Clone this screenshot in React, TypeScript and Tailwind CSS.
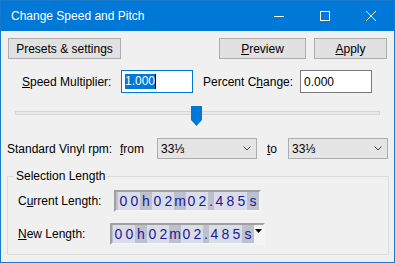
import React from "react"

type Cell = { t: string; digit?: boolean; w?: string }

const timeCells: Cell[] = [
  { t: "0", digit: true },
  { t: "0", digit: true },
  { t: "h", w: "w-[12px]" },
  { t: "0", digit: true },
  { t: "2", digit: true },
  { t: "m", w: "w-[12px]" },
  { t: "0", digit: true },
  { t: "2", digit: true },
  { t: ".", w: "w-[6px]" },
  { t: "4", digit: true },
  { t: "8", digit: true },
  { t: "5", digit: true },
  { t: "s", w: "w-[12px]" },
]

const TimeCtrl = ({ dropdown }: { dropdown?: boolean }) => (
  <div
    className={`flex h-[22px] border-2 border-t-[#a0a0a0] border-l-[#a0a0a0] border-b-[#f4f4f4] border-r-[#f4f4f4] bg-[#bcc0cf] ${
      dropdown ? "w-[155px] pl-[1px]" : "w-[147px] pl-[2px]"
    }`}
  >
    {timeCells.map((c, i) => (
      <div
        key={i}
        className={`h-full flex items-center justify-center text-[14px] leading-none text-[#1a1a96] ${
          c.digit ? "w-[11px] bg-[#dadde8]" : c.w
        }`}
      >
        {c.t}
      </div>
    ))}
    {dropdown && (
      <div className="w-[9px] h-full bg-[#f4f4f4] flex justify-center pt-[4px]">
        <svg width="7" height="4" viewBox="0 0 7 4">
          <path d="M0 0 H7 L3.5 4 Z" fill="#000" />
        </svg>
      </div>
    )}
  </div>
)

const Combo = ({ value }: { value: string }) => (
  <div className="w-[100px] h-[21px] bg-[#e5e5e5] border border-[#adadad] flex items-center justify-between pl-[3px] pr-[5px]">
    <span>{value}</span>
    <svg width="8" height="5" viewBox="0 0 8 5">
      <path d="M0.5 0.5 L4 4 L7.5 0.5" fill="none" stroke="#404040" strokeWidth="1" />
    </svg>
  </div>
)

const Button = ({ className, children }: { className: string; children: React.ReactNode }) => (
  <button className={`h-[21px] bg-[#e1e1e1] border border-[#adadad] text-black flex items-center justify-center ${className}`}>
    {children}
  </button>
)

const App: React.FC = () => {
  return (
    <div className="w-[395px] h-[263px] bg-[#f0f0f0] border border-[#1979ca] font-['Liberation_Sans',Arial,sans-serif] text-[12px] text-black overflow-hidden">
      <div className="h-[30px] bg-[#0078d7] flex items-center text-white">
        <span className="ml-[10px] text-[12px]">Change Speed and Pitch</span>
        <div className="ml-auto flex items-center h-full">
          <div className="w-[46px] h-full flex items-center justify-center">
            <svg width="10" height="10" viewBox="0 0 10 10">
              <path d="M0 5.5 H10" stroke="#fff" strokeWidth="1" />
            </svg>
          </div>
          <div className="w-[46px] h-full flex items-center justify-center">
            <svg width="10" height="10" viewBox="0 0 10 10">
              <rect x="0.5" y="0.5" width="9" height="9" fill="none" stroke="#fff" strokeWidth="1" />
            </svg>
          </div>
          <div className="w-[46px] h-full flex items-center justify-center">
            <svg width="10" height="10" viewBox="0 0 10 10">
              <path d="M0 0 L10 10 M10 0 L0 10" stroke="#fff" strokeWidth="1" />
            </svg>
          </div>
        </div>
      </div>

      <div className="flex mt-[7px] pl-[7px] pr-[7px]">
        <Button className="w-[113px]">Presets &amp; settings</Button>
        <Button className="w-[87px] ml-auto">
          <span className="underline">P</span>review
        </Button>
        <Button className="w-[73px] ml-[8px]">
          <span className="underline">A</span>pply
        </Button>
      </div>

      <div className="flex items-center mt-[11px] pl-[21px]">
        <span className="w-[99px]">
          <span className="underline">S</span>peed Multiplier:
        </span>
        <div className="w-[72px] h-[23px] bg-white border border-[#0078d7] flex items-center pl-[3px]">
          <span className="bg-[#0078d7] text-white leading-[15px]">1.000</span>
          <span className="w-[1px] h-[15px] bg-black" />
        </div>
        <span className="w-[97px] ml-[10px]">
          Percent C<span className="underline">h</span>ange:
        </span>
        <div className="w-[72px] h-[23px] bg-white border border-[#7a7a7a] flex items-center pl-[3px]">
          0.000
        </div>
      </div>

      <div className="relative h-[20px] mt-[13px] mx-[14px]">
        <div className="absolute left-0 right-0 top-[5px] h-[4px] bg-[#e7eaea] border border-[#d6d6d6]" />
        <svg className="absolute left-[176px] top-0" width="11" height="20" viewBox="0 0 11 20">
          <path d="M0 0 H11 V14 L5.5 20 L0 14 Z" fill="#0078d7" />
        </svg>
      </div>

      <div className="flex items-center mt-[12px] pl-[6px]">
        <span className="w-[113px]">Standard Vinyl rpm:</span>
        <span className="w-[37px]">
          <span className="underline">f</span>rom
        </span>
        <Combo value="33⅓" />
        <span className="ml-[10px] w-[21px]">
          <span className="underline">t</span>o
        </span>
        <Combo value="33⅓" />
      </div>

      <fieldset className="mt-[10px] ml-[6px] w-[382px] border border-[#dcdcdc] pb-[9px]">
        <legend className="ml-[6px] px-[2px] leading-[14px]">Selection Length</legend>
        <div className="flex items-center mt-[7px] pl-[10px]">
          <span className="w-[96px]">
            C<span className="underline">u</span>rrent Length:
          </span>
          <TimeCtrl />
        </div>
        <div className="flex items-center mt-[11px] pl-[10px]">
          <span className="w-[92px]">
            <span className="underline">N</span>ew Length:
          </span>
          <TimeCtrl dropdown />
        </div>
      </fieldset>
    </div>
  )
}

export default App
